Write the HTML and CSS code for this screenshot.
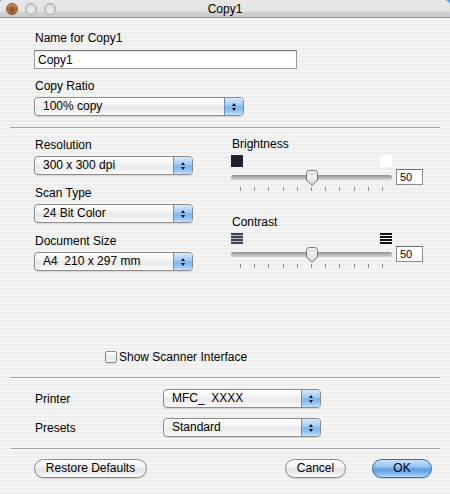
FILE: index.html
```html
<!DOCTYPE html>
<html>
<head>
<meta charset="utf-8">
<title>Copy1</title>
<link rel="stylesheet" href="styles.css">
</head>
<body>
<div class="window">
  <div class="titlebar">
    <div class="lights">
      <span class="light close"></span>
      <span class="light off"></span>
      <span class="light off"></span>
    </div>
    <div class="title">Copy1</div>
    <div></div>
  </div>

  <section class="sec1">
    <div class="label">Name for Copy1</div>
    <div class="textfield">Copy1</div>
    <div class="label lbl-gap">Copy Ratio</div>
    <div class="popup w-ratio"><span class="ptext">100% copy</span><span class="parrows"><i class="up"></i><i class="down"></i></span></div>
  </section>

  <hr class="sep sep1">

  <section class="sec2">
    <div class="col-left">
      <div class="label first">Resolution</div>
      <div class="popup w-left"><span class="ptext">300 x 300 dpi</span><span class="parrows"><i class="up"></i><i class="down"></i></span></div>
      <div class="label next">Scan Type</div>
      <div class="popup w-left"><span class="ptext">24 Bit Color</span><span class="parrows"><i class="up"></i><i class="down"></i></span></div>
      <div class="label next">Document Size</div>
      <div class="popup w-left"><span class="ptext">A4&nbsp; 210 x 297 mm</span><span class="parrows"><i class="up"></i><i class="down"></i></span></div>
    </div>
    <div class="col-right">
      <div class="label rfirst">Brightness</div>
      <div class="icons">
        <span class="sq dark"></span>
        <span class="sq light-sq"></span>
      </div>
      <div class="sliderrow">
        <div class="slider">
          <div class="track"></div>
          <svg class="thumb" width="14" height="18" viewBox="0 0 14 18"><defs><linearGradient id="tg1" x1="0" y1="0" x2="0" y2="1"><stop offset="0" stop-color="#ffffff"/><stop offset="1" stop-color="#d6d6d6"/></linearGradient></defs><path d="M1.5,4.5 Q1.5,1.5 4.5,1.5 L9.5,1.5 Q12.5,1.5 12.5,4.5 L12.5,11 L7,16.5 L1.5,11 Z" fill="url(#tg1)" stroke="#707070" stroke-width="1"/><path d="M3,5 L11,5" stroke="#c8c8c8" stroke-width="1"/></svg>
          <div class="ticks"><i></i><i></i><i></i><i></i><i></i><i></i><i></i><i></i><i></i><i></i><i></i></div>
        </div>
        <div class="valbox">50</div>
      </div>

      <div class="label rnext">Contrast</div>
      <div class="icons icons2">
        <svg width="12" height="11" viewBox="0 0 12 11"><rect x="0" y="0" width="12" height="11" fill="#b6bec8"/><rect x="0" y="0" width="12" height="2" fill="#3c4454"/><rect x="0" y="3" width="12" height="2" fill="#3c4454"/><rect x="0" y="6" width="12" height="2" fill="#3c4454"/><rect x="0" y="9" width="12" height="2" fill="#3c4454"/></svg>
        <svg width="12" height="11" viewBox="0 0 12 11"><rect x="0" y="0" width="12" height="11" fill="#ffffff"/><rect x="0" y="0" width="12" height="2" fill="#111111"/><rect x="0" y="3" width="12" height="2" fill="#111111"/><rect x="0" y="6" width="12" height="2" fill="#111111"/><rect x="0" y="9" width="12" height="2" fill="#111111"/></svg>
      </div>
      <div class="sliderrow">
        <div class="slider">
          <div class="track"></div>
          <svg class="thumb" width="14" height="18" viewBox="0 0 14 18"><defs><linearGradient id="tg2" x1="0" y1="0" x2="0" y2="1"><stop offset="0" stop-color="#ffffff"/><stop offset="1" stop-color="#d6d6d6"/></linearGradient></defs><path d="M1.5,4.5 Q1.5,1.5 4.5,1.5 L9.5,1.5 Q12.5,1.5 12.5,4.5 L12.5,11 L7,16.5 L1.5,11 Z" fill="url(#tg2)" stroke="#707070" stroke-width="1"/><path d="M3,5 L11,5" stroke="#c8c8c8" stroke-width="1"/></svg>
          <div class="ticks"><i></i><i></i><i></i><i></i><i></i><i></i><i></i><i></i><i></i><i></i><i></i></div>
        </div>
        <div class="valbox">50</div>
      </div>
    </div>
  </section>

  <div class="checkrow">
    <span class="checkbox"></span><span class="checklabel">Show Scanner Interface</span>
  </div>

  <hr class="sep sep2">

  <section class="rows">
    <div class="rowlabel">Printer</div>
    <div class="popup w-bottom"><span class="ptext">MFC_&nbsp; XXXX</span><span class="parrows"><i class="up"></i><i class="down"></i></span></div>
    <div class="rowlabel">Presets</div>
    <div class="popup w-bottom"><span class="ptext">Standard</span><span class="parrows"><i class="up"></i><i class="down"></i></span></div>
  </section>

  <hr class="sep sep3">

  <div class="buttons">
    <div class="btn restore">Restore Defaults</div>
    <div class="spacer"></div>
    <div class="btn cancel">Cancel</div>
    <div class="btn ok">OK</div>
  </div>
</div>
</body>
</html>
```
FILE: styles.css
```css
* { box-sizing: border-box; }
html, body { margin: 0; padding: 0; }
body {
  width: 450px;
  height: 494px;
  overflow: hidden;
  background: #5f92d8;
  font-family: "Liberation Sans", Arial, sans-serif;
  font-size: 12px;
  color: #000;
}
.window {
  width: 450px;
  height: 494px;
  border-top-right-radius: 6px;
  border-top-left-radius: 3px;
  overflow: hidden;
  background: repeating-linear-gradient(to bottom, #eeeeee 0, #eeeeee 2px, #f4f4f4 2px, #f4f4f4 4px);
}
.titlebar {
  height: 18px;
  border-bottom: 1px solid #8f8f8f;
  background: linear-gradient(to bottom, #e8e8e8 0, #e3e3e3 11px, #d0d0d0 12px, #cccccc 17px);
  display: grid;
  grid-template-columns: 1fr auto 1fr;
  align-items: center;
}
.lights { display: flex; gap: 7px; padding-left: 6px; align-items: center; }
.light {
  width: 12px; height: 12px; border-radius: 50%;
  display: block;
}
.light.close {
  background: radial-gradient(circle at 50% 60%, #8a4a22 0, #b06a35 45%, #d9a070 80%, #e8c09a 100%);
  border: 1px solid #7a5030;
}
.light.off {
  background: radial-gradient(circle at 50% 65%, #f2f2f2 0, #dcdcdc 55%, #c8c8c8 100%);
  border: 1px solid #a8a8a8;
}
.title { font-size: 12px; line-height: 14px; padding-top: 1px; }

.label { line-height: 14px; padding-left: 1px; white-space: nowrap; }

.sec1 { padding: 13px 0 0 34px; }
.textfield {
  margin-top: 5px;
  width: 263px;
  height: 19px;
  background: #fff;
  border: 1px solid #9a9a9a;
  border-top-color: #7a7a7a;
  box-shadow: inset 0 1px 1px rgba(0,0,0,0.12);
  padding: 2px 0 0 3px;
  line-height: 14px;
}
.lbl-gap { margin-top: 10px; }

.popup {
  margin-top: 4px;
  height: 19px;
  display: flex;
  border: 1px solid #8c8c8c;
  border-radius: 4px;
  overflow: hidden;
  background: linear-gradient(to bottom, #ffffff 0%, #f6f6f6 35%, #e9e9e9 52%, #eeeeee 70%, #fafafa 100%);
  box-shadow: 0 1px 1px rgba(0,0,0,0.12);
}
.ptext { flex: 1; padding-left: 8px; line-height: 17px; white-space: nowrap; }
.parrows {
  width: 19px;
  border-left: 1px solid #6f8fb8;
  background: linear-gradient(to bottom, #d3e8fc 0%, #a6cff6 40%, #7fb5ea 52%, #8cc2f2 75%, #c4e2fd 100%);
  display: flex;
  flex-direction: column;
  align-items: center;
  justify-content: center;
  gap: 2px;
}
.parrows i { display: block; width: 0; height: 0; border-left: 2.5px solid transparent; border-right: 2.5px solid transparent; }
.parrows .up { border-bottom: 3px solid #111; }
.parrows .down { border-top: 3px solid #111; }

.w-ratio { width: 210px; }
.w-left { width: 159px; }
.w-bottom { width: 158px; }

.sep {
  margin: 0 10px;
  height: 2px;
  border: 0;
  border-top: 1px solid #a4a4a4;
  border-bottom: 1px solid #fbfbfb;
}
.sep1 { margin-top: 11px; }

.sec2 {
  display: grid;
  grid-template-columns: 159px 192px;
  column-gap: 38px;
  padding-left: 34px;
}
.col-left .first { margin-top: 9px; }
.col-left .next { margin-top: 11px; }
.col-right .rfirst { margin-top: 8px; }
.col-right .rnext { margin-top: 22px; }

.icons {
  margin-top: 4px;
  width: 161px;
  height: 12px;
  display: flex;
  justify-content: space-between;
}
.icons2 { margin-top: 4px; height: 11px; }
.icons2 svg { display: block; }
.sq { display: block; width: 12px; height: 12px; }
.sq.dark { background: #251c2c; }
.sq.light-sq { background: #ffffff; }

.sliderrow {
  margin-top: 2px;
  display: flex;
  gap: 4px;
  align-items: flex-start;
}
.slider { position: relative; width: 161px; height: 24px; }
.track {
  position: absolute;
  left: 0; right: 0; top: 6px;
  height: 5px;
  border-radius: 3px;
  background: linear-gradient(to bottom, #8f8f8f, #b4b4b4 50%, #d2d2d2);
}
.thumb { position: absolute; left: 74px; top: 0; display: block; }
.ticks {
  position: absolute;
  left: 9px; right: 9px; top: 18px;
  height: 5px;
  display: flex;
  justify-content: space-between;
}
.ticks i { display: block; width: 1px; height: 4px; background: #8e8e8e; }
.valbox {
  width: 27px;
  height: 16px;
  background: #fff;
  border: 1px solid #8a8a8a;
  border-top-color: #6e6e6e;
  font-size: 11px;
  line-height: 14px;
  padding-left: 3px;
}

.checkrow {
  margin-top: 79px;
  padding-left: 105px;
  display: flex;
  align-items: center;
  height: 14px;
}
.checkbox {
  width: 12px; height: 12px;
  border: 1px solid #8a8a8a;
  border-radius: 2px;
  background: linear-gradient(to bottom, #ffffff, #e6e6e6 55%, #f6f6f6);
  box-shadow: 0 1px 1px rgba(0,0,0,0.12);
}
.checklabel { margin-left: 2px; line-height: 14px; }
.sep2 { margin-top: 13px; }

.rows {
  margin-top: 10px;
  padding-left: 35px;
  display: grid;
  grid-template-columns: 128px 158px;
  row-gap: 10px;
  align-items: center;
}
.rows .popup { margin-top: 0; }
.rowlabel { line-height: 14px; }
.sep3 { margin-top: 11px; }

.buttons {
  margin-top: 9px;
  padding: 0 18px 0 34px;
  display: flex;
  align-items: center;
}
.spacer { flex: 1; }
.btn {
  height: 19px;
  border: 1px solid #8a8a8a;
  border-radius: 10px;
  background: linear-gradient(to bottom, #ffffff 0%, #f4f4f4 40%, #e2e2e2 55%, #f0f0f0 80%, #fdfdfd 100%);
  box-shadow: 0 1px 1px rgba(0,0,0,0.15);
  text-align: center;
  line-height: 17px;
  white-space: nowrap;
}
.restore { width: 113px; }
.cancel { width: 61px; }
.ok {
  width: 60px;
  margin-left: 26px;
  border-color: #41679c;
  background: linear-gradient(to bottom, #c6e2fb 0%, #93c4f2 40%, #5f9de3 55%, #7db8ef 80%, #b6dcfc 100%);
}
```
